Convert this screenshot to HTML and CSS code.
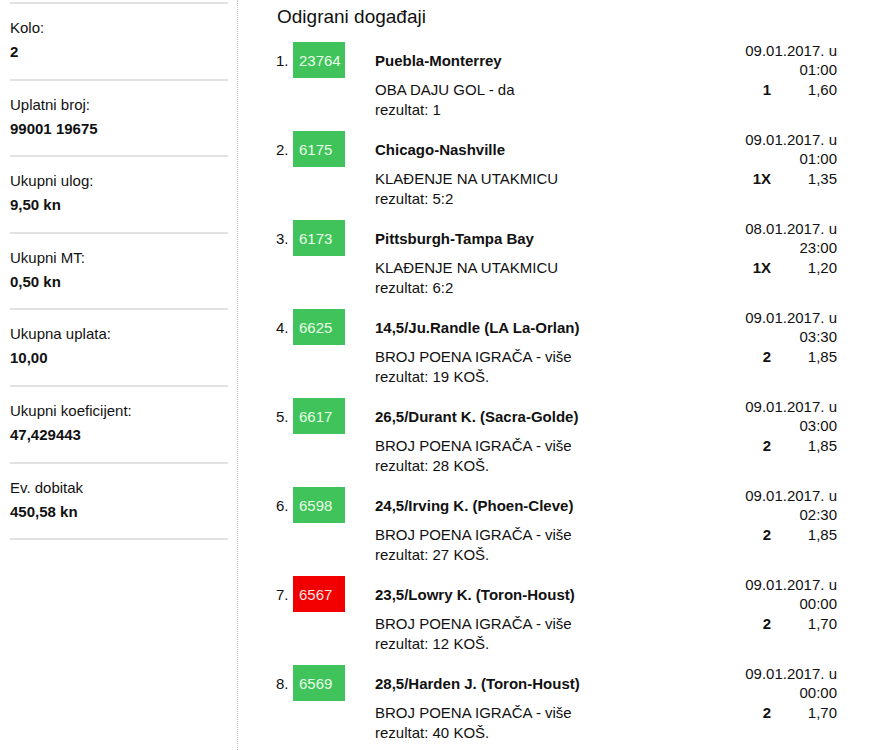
FILE: index.html
```html
<!DOCTYPE html>
<html lang="hr">
<head>
  <meta charset="UTF-8" />
  <meta name="viewport" content="width=device-width, initial-scale=1.0"/>
  <title>Listić</title>
  <link rel="stylesheet" href="styles.css">
</head>
<body>

  <div class="page">
    <div class="sidebar">
      <div class="info">
        <div class="label">Kolo:</div>
        <div class="value">2</div>
      </div>
      <div class="info">
        <div class="label">Uplatni broj:</div>
        <div class="value">99001 19675</div>
      </div>
      <div class="info">
        <div class="label">Ukupni ulog:</div>
        <div class="value">9,50 kn</div>
      </div>
      <div class="info">
        <div class="label">Ukupni MT:</div>
        <div class="value">0,50 kn</div>
      </div>
      <div class="info">
        <div class="label">Ukupna uplata:</div>
        <div class="value">10,00</div>
      </div>
      <div class="info">
        <div class="label">Ukupni koeficijent:</div>
        <div class="value">47,429443</div>
      </div>
      <div class="info">
        <div class="label">Ev. dobitak</div>
        <div class="value">450,58 kn</div>
      </div>
    </div>

    <div class="main">
      <h1>Odigrani događaji</h1>

      <div class="event">
        <span class="num">1.</span>
        <span class="code win">23764</span>
        <div class="match">Puebla-Monterrey</div>
        <div class="time">09.01.2017. u <span class="hour">01:00</span></div>
        <div class="market">OBA DAJU GOL - da<br>rezultat: 1</div>
        <div class="pick">1</div>
        <div class="odds">1,60</div>
      </div>

      <div class="event">
        <span class="num">2.</span>
        <span class="code win">6175</span>
        <div class="match">Chicago-Nashville</div>
        <div class="time">09.01.2017. u <span class="hour">01:00</span></div>
        <div class="market">KLAĐENJE NA UTAKMICU<br>rezultat: 5:2</div>
        <div class="pick">1X</div>
        <div class="odds">1,35</div>
      </div>

      <div class="event">
        <span class="num">3.</span>
        <span class="code win">6173</span>
        <div class="match">Pittsburgh-Tampa Bay</div>
        <div class="time">08.01.2017. u <span class="hour">23:00</span></div>
        <div class="market">KLAĐENJE NA UTAKMICU<br>rezultat: 6:2</div>
        <div class="pick">1X</div>
        <div class="odds">1,20</div>
      </div>

      <div class="event">
        <span class="num">4.</span>
        <span class="code win">6625</span>
        <div class="match">14,5/Ju.Randle (LA La-Orlan)</div>
        <div class="time">09.01.2017. u <span class="hour">03:30</span></div>
        <div class="market">BROJ POENA IGRAČA - više<br>rezultat: 19 KOŠ.</div>
        <div class="pick">2</div>
        <div class="odds">1,85</div>
      </div>

      <div class="event">
        <span class="num">5.</span>
        <span class="code win">6617</span>
        <div class="match">26,5/Durant K. (Sacra-Golde)</div>
        <div class="time">09.01.2017. u <span class="hour">03:00</span></div>
        <div class="market">BROJ POENA IGRAČA - više<br>rezultat: 28 KOŠ.</div>
        <div class="pick">2</div>
        <div class="odds">1,85</div>
      </div>

      <div class="event">
        <span class="num">6.</span>
        <span class="code win">6598</span>
        <div class="match">24,5/Irving K. (Phoen-Cleve)</div>
        <div class="time">09.01.2017. u <span class="hour">02:30</span></div>
        <div class="market">BROJ POENA IGRAČA - više<br>rezultat: 27 KOŠ.</div>
        <div class="pick">2</div>
        <div class="odds">1,85</div>
      </div>

      <div class="event">
        <span class="num">7.</span>
        <span class="code lost">6567</span>
        <div class="match">23,5/Lowry K. (Toron-Houst)</div>
        <div class="time">09.01.2017. u <span class="hour">00:00</span></div>
        <div class="market">BROJ POENA IGRAČA - više<br>rezultat: 12 KOŠ.</div>
        <div class="pick">2</div>
        <div class="odds">1,70</div>
      </div>

      <div class="event">
        <span class="num">8.</span>
        <span class="code win">6569</span>
        <div class="match">28,5/Harden J. (Toron-Houst)</div>
        <div class="time">09.01.2017. u <span class="hour">00:00</span></div>
        <div class="market">BROJ POENA IGRAČA - više<br>rezultat: 40 KOŠ.</div>
        <div class="pick">2</div>
        <div class="odds">1,70</div>
      </div>
    </div>
  </div>

</body>
</html>
```

FILE: styles.css
```css
body {
  font-family: "Liberation Sans", Arial, sans-serif;
  font-size: 15px;
  color: #111;
  margin: 0;
  background: #fff;
}
.page {
  display: flex;
  min-height: 100vh;
}
.sidebar {
  width: 218px;
  margin-left: 10px;
  padding-top: 2px;
  padding-right: 9px;
  border-right: 1px dotted #c8c8c8;
}
.info {
  border-top: 2px solid #e2e2e2;
  padding: 14px 0 16.6px;
  line-height: 20px;
}
.info:last-child {
  border-bottom: 2px solid #e2e2e2;
}
.info .value {
  margin-top: 4px;
  font-weight: bold;
}
.main {
  flex: 1;
  padding: 5px 40px 0 38px;
}
h1 {
  font-size: 19px;
  font-weight: normal;
  line-height: 24px;
  margin: 0 0 13px 1px;
}
.event {
  display: grid;
  grid-template-columns: 17px 52px 30px 1fr auto 66px;
  row-gap: 2px;
  margin-bottom: 11px;
  line-height: 20px;
}
.num {
  height: 36px;
  line-height: 37px;
}
.code {
  height: 36px;
  line-height: 37px;
  padding-left: 6px;
}
.code.win {
  background: #40c35a;
  color: #e8ffe8;
}
.code.lost {
  background: #f20000;
  color: #ffe4e4;
}
.match {
  grid-column: 4;
  font-weight: bold;
  line-height: 37px;
  height: 36px;
}
.time {
  grid-column: 5 / 7;
  text-align: right;
  line-height: 19px;
  margin-top: -1px;
  height: 36px;
}
.hour {
  display: block;
}
.market {
  grid-column: 4;
  grid-row: 2;
}
.pick {
  grid-column: 5;
  grid-row: 2;
  font-weight: bold;
  text-align: right;
}
.odds {
  grid-column: 6;
  grid-row: 2;
  text-align: right;
}
```
